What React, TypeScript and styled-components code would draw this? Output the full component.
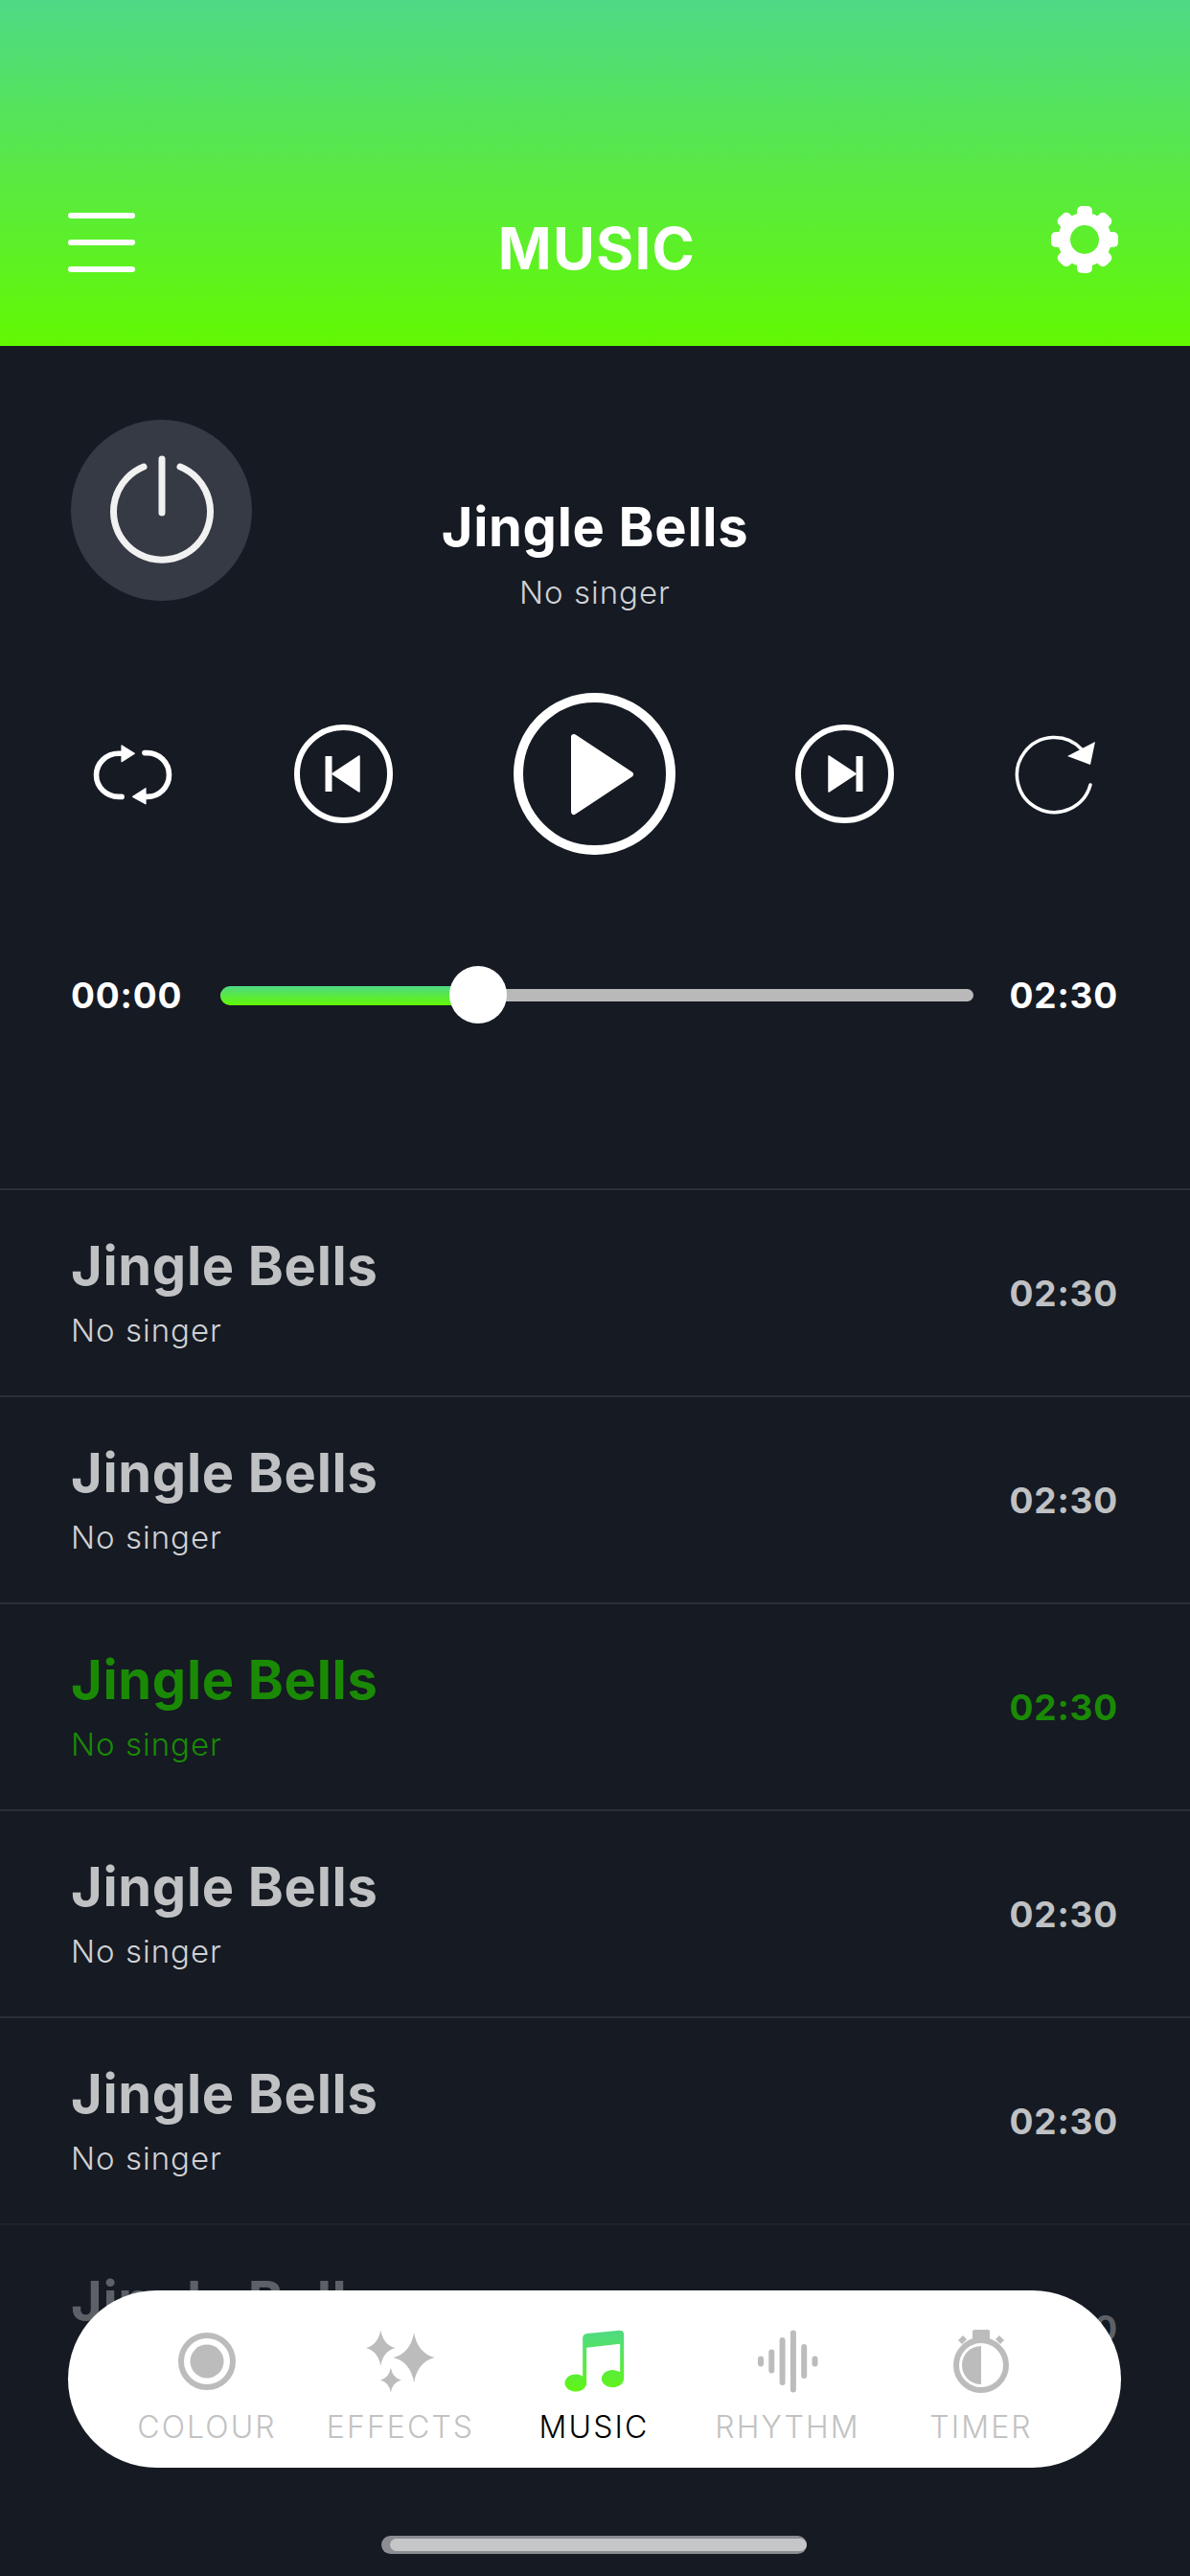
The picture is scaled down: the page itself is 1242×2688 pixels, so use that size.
import React from "react";
import styled, { createGlobalStyle } from "styled-components";

const GlobalStyle = createGlobalStyle`
  html, body {
    margin: 0;
    padding: 0;
    background: #151a23;
    font-family: Inter, "Liberation Sans", sans-serif;
  }
`;

const Page = styled.div`
  position: relative;
  width: 1242px;
  height: 2688px;
  overflow: hidden;
  background: #151a23;
`;

const Header = styled.header`
  height: 361px;
  box-sizing: border-box;
  padding: 214px 74px 0 71px;
  display: grid;
  grid-template-columns: 1fr auto 1fr;
  align-items: start;
  background: linear-gradient(#4fd986, #62f902);
`;

const MenuButton = styled.div`
  width: 70px;
  padding-top: 8px;
  display: flex;
  flex-direction: column;
  gap: 22px;
`;

const MenuBar = styled.span`
  display: block;
  height: 6px;
  border-radius: 3px;
  background: #fff;
`;

const HeaderTitle = styled.h1`
  margin: 20px 0 0 7px;
  font-size: 60px;
  line-height: 50px;
  font-weight: 700;
  color: #fff;
  letter-spacing: 1.2px;
`;

const GearWrap = styled.div`
  justify-self: end;
  display: flex;
`;

const PlayerTop = styled.section`
  padding: 77px 0 0 74px;
  display: grid;
  grid-template-columns: 189px 1fr;
`;

const PowerButton = styled.div`
  width: 189px;
  height: 189px;
  border-radius: 50%;
  background: #353a44;
  display: flex;
  align-items: center;
  justify-content: center;
`;

const NowPlaying = styled.div`
  margin-left: -263px;
  padding-top: 80px;
  text-align: center;
`;

const NowTitle = styled.div`
  font-size: 56px;
  line-height: 64px;
  font-weight: 700;
  letter-spacing: 0.7px;
  color: #fff;
`;

const NowSinger = styled.div`
  margin-top: 16px;
  font-size: 33px;
  line-height: 40px;
  font-weight: 300;
  letter-spacing: 1px;
  color: #d0d1d3;
`;

const Controls = styled.div`
  margin-top: 85px;
  padding: 0 97px;
  height: 169px;
  display: flex;
  align-items: center;
  justify-content: space-between;
`;

const SliderRow = styled.div`
  margin-top: 116px;
  padding: 0 75px 0 74px;
  height: 60px;
  display: grid;
  grid-template-columns: 156px 786px 1fr;
  align-items: center;
`;

const TimeLabel = styled.span<{ $right?: boolean }>`
  font-size: 37px;
  font-weight: 700;
  letter-spacing: 0.8px;
  color: #fff;
  text-align: ${(p) => (p.$right ? "right" : "left")};
`;

const Track = styled.div`
  position: relative;
  height: 13px;
  border-radius: 7px;
  background: #b9b9b9;
`;

const TrackFill = styled.div<{ $pct: number }>`
  position: absolute;
  left: 0;
  top: -3px;
  height: 20px;
  width: ${(p) => p.$pct}%;
  border-radius: 10px 0 0 10px;
  background: linear-gradient(#4fd986, #62f902);
`;

const Thumb = styled.div<{ $pct: number }>`
  position: absolute;
  left: ${(p) => p.$pct}%;
  top: 50%;
  width: 60px;
  height: 60px;
  border-radius: 50%;
  background: #fff;
  transform: translate(-50%, -50%);
`;

const SongList = styled.ul`
  list-style: none;
  margin: 172px 0 0;
  padding: 0;
`;

const SongRow = styled.li<{ $active?: boolean; $dim?: boolean }>`
  height: 216px;
  box-sizing: border-box;
  padding: 0 75px 0 74px;
  border-top: 2px solid #2a2f38;
  display: flex;
  align-items: center;
  justify-content: space-between;
  opacity: ${(p) => (p.$dim ? 0.42 : 1)};
  color: ${(p) => (p.$active ? "#1a8a05" : "#c0c1c3")};
`;

const SongText = styled.div`
  padding-bottom: 2px;
  display: flex;
  flex-direction: column;
  gap: 15px;
`;

const SongTitle = styled.div`
  font-size: 56px;
  line-height: 64px;
  font-weight: 700;
  letter-spacing: 0.7px;
`;

const SongSinger = styled.div<{ $active?: boolean }>`
  font-size: 33px;
  line-height: 40px;
  font-weight: 300;
  letter-spacing: 1px;
  color: ${(p) => (p.$active ? "#1a8a05" : "#d0d1d3")};
`;

const SongTime = styled.div`
  font-size: 37px;
  font-weight: 700;
  letter-spacing: 0.8px;
`;

const TabBar = styled.nav`
  position: absolute;
  left: 71px;
  top: 2390px;
  width: 1099px;
  height: 185px;
  box-sizing: border-box;
  padding: 38px 44px 0;
  border-radius: 93px;
  background: #fff;
  display: grid;
  grid-template-columns: repeat(5, 202px);
`;

const Tab = styled.div<{ $active?: boolean }>`
  display: flex;
  flex-direction: column;
  align-items: center;
  color: ${(p) => (p.$active ? "#000" : "#c2c2c2")};
`;

const TabIcon = styled.div`
  height: 72px;
  display: flex;
  align-items: center;
  justify-content: center;
`;

const TabLabel = styled.span`
  margin-top: 13px;
  font-size: 32px;
  line-height: 40px;
  font-weight: 300;
  letter-spacing: 2.1px;
  white-space: nowrap;
`;

const HomeIndicator = styled.div`
  position: absolute;
  left: 398px;
  top: 2646px;
  width: 444px;
  height: 19px;
  border-radius: 10px;
  background: #8a8d92;
  &::after {
    content: "";
    position: absolute;
    left: 9px;
    right: 0;
    top: 3px;
    bottom: 3px;
    border-radius: 7px;
    background: #c4c6c8;
  }
`;

const Gear = () => (
  <svg width="72" height="72" viewBox="0 0 72 72">
    <circle cx="36" cy="36" r="21.5" fill="none" stroke="#fff" strokeWidth="13" />
    {[0, 45, 90, 135, 180, 225, 270, 315].map((a) => (
      <rect key={a} x="28" y="1" width="16" height="16" rx="5" fill="#fff" transform={`rotate(${a} 36 36)`} />
    ))}
  </svg>
);

const PowerIcon = () => (
  <svg width="120" height="120" viewBox="0 0 120 120" fill="none" stroke="#f1f1f1" strokeLinecap="round">
    <path d="M41 14 A50.5 50.5 0 1 0 79 14" strokeWidth="7" />
    <path d="M60 6 V62" strokeWidth="7" />
  </svg>
);

const RepeatIcon = () => (
  <svg width="85" height="68" viewBox="110 160 255 205" fill="none">
    <path d="M200 333 H190 A70 68 0 0 1 190 197 H210" stroke="#fff" strokeWidth="17" strokeLinecap="round" />
    <path d="M200 172 L240 197 L200 222 Z" fill="#fff" stroke="#fff" strokeWidth="4" strokeLinejoin="round" />
    <path d="M272 195 H280 A68 68 0 0 1 280 333 H262" stroke="#fff" strokeWidth="17" strokeLinecap="round" />
    <path d="M275 307 L235 333 L275 355 Z" fill="#fff" stroke="#fff" strokeWidth="4" strokeLinejoin="round" />
  </svg>
);

const SkipIcon = ({ flip }: { flip?: boolean }) => (
  <svg width="103" height="103" viewBox="0 0 103 103">
    <circle cx="51.5" cy="51.5" r="48.5" fill="none" stroke="#fff" strokeWidth="6" />
    <g transform={flip ? "translate(103 0) scale(-1 1)" : undefined} fill="#fff">
      <rect x="32.5" y="33" width="7" height="37" />
      <path d="M40 51.5 L68 33 V70 Z" stroke="#fff" strokeWidth="1.5" strokeLinejoin="round" />
    </g>
  </svg>
);

const PlayIcon = () => (
  <svg width="169" height="169" viewBox="0 0 169 169">
    <circle cx="84.5" cy="84.5" r="79.5" fill="none" stroke="#fff" strokeWidth="10" />
    <path d="M63 46 L122 85 L63 124 Z" fill="#fff" stroke="#fff" strokeWidth="6" strokeLinejoin="round" />
  </svg>
);

const RedoIcon = () => (
  <svg width="87" height="87" viewBox="0 0 87 87" fill="none">
    <path d="M71 18 A39 39 0 1 0 80 55" stroke="#fff" strokeWidth="3.5" strokeLinecap="round" />
    <path d="M85 10 L56 25 L80 34 Z" fill="#fff" />
  </svg>
);

const ColourIcon = () => (
  <svg width="60" height="60" viewBox="0 0 60 60">
    <circle cx="30" cy="30" r="27" fill="none" stroke="#bcbcbc" strokeWidth="6" />
    <circle cx="30" cy="30" r="17.5" fill="#bcbcbc" />
  </svg>
);

const star = (cx: number, cy: number, w: number, h: number) => {
  const k = 0.18;
  return `M${cx} ${cy - h} Q${cx + w * k} ${cy - h * k} ${cx + w} ${cy} Q${cx + w * k} ${cy + h * k} ${cx} ${cy + h} Q${cx - w * k} ${cy + h * k} ${cx - w} ${cy} Q${cx - w * k} ${cy - h * k} ${cx} ${cy - h}Z`;
};

const EffectsIcon = () => (
  <svg width="78" height="70" viewBox="110 85 235 210">
    <path d={star(270, 178, 65, 78)} fill="#bcbcbc" />
    <path d={star(165, 148, 46, 56)} fill="#bcbcbc" />
    <path d={star(197, 249, 33, 39)} fill="#bcbcbc" />
  </svg>
);

const MusicIcon = () => (
  <svg width="67" height="68" viewBox="720 88 200 204">
    <defs>
      <linearGradient id="noteGrad" gradientUnits="userSpaceOnUse" x1="0" y1="92" x2="0" y2="285">
        <stop offset="0" stopColor="#4fd986" />
        <stop offset="1" stopColor="#60f614" />
      </linearGradient>
    </defs>
    <path
      d="M783 118 Q783 104 797 103 L897 93 Q912 92 912 106 V245 A35 27 0 1 1 900 224 V135 L795 147 V258 A34 27 0 1 1 783 237 Z"
      fill="url(#noteGrad)"
    />
  </svg>
);

const rhythmBars = [
  { x: 0, h: 11 },
  { x: 11.3, h: 25 },
  { x: 22.6, h: 50 },
  { x: 33.9, h: 65 },
  { x: 45.2, h: 36 },
  { x: 56.5, h: 11 },
];

const RhythmIcon = () => (
  <svg width="63" height="66" viewBox="0 0 63 66">
    {rhythmBars.map((b) => (
      <rect key={b.x} x={b.x} y={33 - b.h / 2} width="6" height={b.h} rx="3" fill="#bcbcbc" />
    ))}
  </svg>
);

const TimerIcon = () => (
  <svg width="60" height="66" viewBox="0 0 60 66">
    <rect x="21" y="0" width="18" height="12" rx="2" fill="#bcbcbc" />
    <path d="M6 11 L11 6 L15 10 L10 15 Z M54 11 L49 6 L45 10 L50 15 Z" fill="#bcbcbc" />
    <circle cx="30" cy="37" r="26" fill="none" stroke="#bcbcbc" strokeWidth="6" />
    <path d="M30 17 A20 20 0 0 0 30 57 Z" fill="#bcbcbc" />
  </svg>
);

const songs = [{}, {}, { active: true }, {}, {}, { dim: true }];

const tabs = [
  { label: "COLOUR", icon: <ColourIcon /> },
  { label: "EFFECTS", icon: <EffectsIcon /> },
  { label: "MUSIC", icon: <MusicIcon />, active: true },
  { label: "RHYTHM", icon: <RhythmIcon /> },
  { label: "TIMER", icon: <TimerIcon /> },
];

function App() {
  return (
    <Page>
      <GlobalStyle />
      <Header>
        <MenuButton>
          <MenuBar />
          <MenuBar />
          <MenuBar />
        </MenuButton>
        <HeaderTitle>MUSIC</HeaderTitle>
        <GearWrap>
          <Gear />
        </GearWrap>
      </Header>

      <PlayerTop>
        <PowerButton>
          <PowerIcon />
        </PowerButton>
        <NowPlaying>
          <NowTitle>Jingle Bells</NowTitle>
          <NowSinger>No singer</NowSinger>
        </NowPlaying>
      </PlayerTop>

      <Controls>
        <RepeatIcon />
        <SkipIcon />
        <PlayIcon />
        <SkipIcon flip />
        <RedoIcon />
      </Controls>

      <SliderRow>
        <TimeLabel>00:00</TimeLabel>
        <Track>
          <TrackFill $pct={34} />
          <Thumb $pct={34.2} />
        </Track>
        <TimeLabel $right>02:30</TimeLabel>
      </SliderRow>

      <SongList>
        {songs.map((s, i) => (
          <SongRow key={i} $active={s.active} $dim={s.dim}>
            <SongText>
              <SongTitle>Jingle Bells</SongTitle>
              <SongSinger $active={s.active}>No singer</SongSinger>
            </SongText>
            <SongTime>02:30</SongTime>
          </SongRow>
        ))}
      </SongList>

      <TabBar>
        {tabs.map((t) => (
          <Tab key={t.label} $active={t.active}>
            <TabIcon>{t.icon}</TabIcon>
            <TabLabel>{t.label}</TabLabel>
          </Tab>
        ))}
      </TabBar>
      <HomeIndicator />
    </Page>
  );
}

export default App;
